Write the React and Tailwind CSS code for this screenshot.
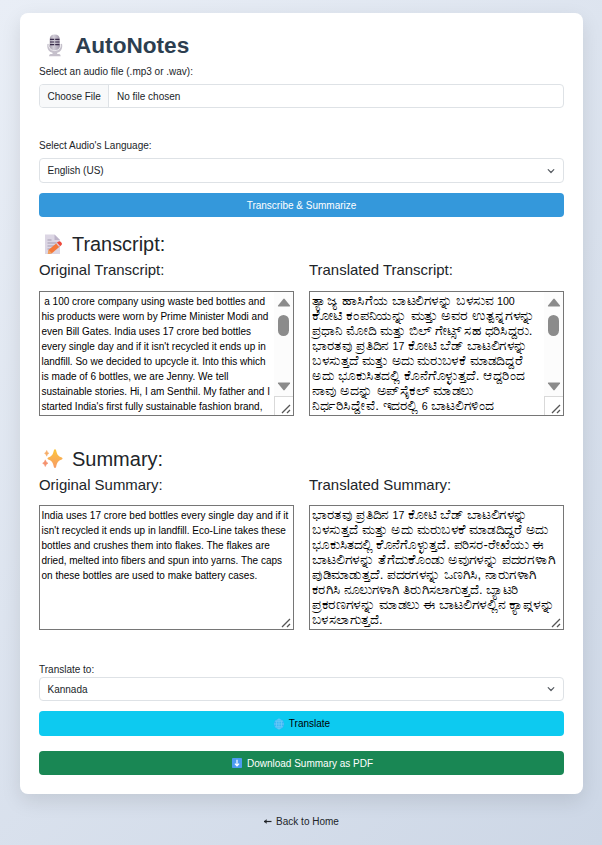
import React from "react";

const ORIGINAL_TRANSCRIPT = [
  "\u00a0a 100 crore company using waste bed bottles and",
  "his products were worn by Prime Minister Modi and",
  "even Bill Gates. India uses 17 crore bed bottles",
  "every single day and if it isn't recycled it ends up in",
  "landfill. So we decided to upcycle it. Into this which",
  "is made of 6 bottles, we are Jenny. We tell",
  "sustainable stories. Hi, I am Senthil. My father and I",
  "started India's first fully sustainable fashion brand,",
];

const TRANSLATED_TRANSCRIPT = [
  ["ತ್ಯಾಜ್ಯ ಹಾಸಿಗೆಯ ಬಾಟಲಿಗಳನ್ನು ಬಳಸುವ 100", "scale-x-[1.064]"],
  ["ಕೋಟಿ ಕಂಪನಿಯನ್ನು ಮತ್ತು ಅವರ ಉತ್ಪನ್ನಗಳನ್ನು", "scale-x-[1.121]"],
  ["ಪ್ರಧಾನಿ ಮೋದಿ ಮತ್ತು ಬಿಲ್ ಗೇಟ್ಸ್ ಸಹ ಧರಿಸಿದ್ದರು.", "scale-x-[1.048]"],
  ["ಭಾರತವು ಪ್ರತಿದಿನ 17 ಕೋಟಿ ಬೆಡ್ ಬಾಟಲಿಗಳನ್ನು", "scale-x-[1.060]"],
  ["ಬಳಸುತ್ತದೆ ಮತ್ತು ಅದು ಮರುಬಳಕೆ ಮಾಡದಿದ್ದರೆ", "scale-x-[1.061]"],
  ["ಅದು ಭೂಕುಸಿತದಲ್ಲಿ ಕೊನೆಗೊಳ್ಳುತ್ತದೆ. ಆದ್ದರಿಂದ", "scale-x-[1.057]"],
  ["ನಾವು ಅದನ್ನು ಅಪ್‌ಸೈಕಲ್ ಮಾಡಲು", "scale-x-[1.095]"],
  ["ನಿರ್ಧರಿಸಿದ್ದೇವೆ. ಇದರಲ್ಲಿ 6 ಬಾಟಲಿಗಳಿಂದ", "scale-x-[1.072]"],
];

const ORIGINAL_SUMMARY = [
  "India uses 17 crore bed bottles every single day and if it",
  "isn't recycled it ends up in landfill. Eco-Line takes these",
  "bottles and crushes them into flakes. The flakes are",
  "dried, melted into fibers and spun into yarns. The caps",
  "on these bottles are used to make battery cases.",
];

const TRANSLATED_SUMMARY = [
  ["ಭಾರತವು ಪ್ರತಿದಿನ 17 ಕೋಟಿ ಬೆಡ್ ಬಾಟಲಿಗಳನ್ನು", "scale-x-[1.060]"],
  ["ಬಳಸುತ್ತದೆ ಮತ್ತು ಅದು ಮರುಬಳಕೆ ಮಾಡದಿದ್ದರೆ ಅದು", "scale-x-[1.057]"],
  ["ಭೂಕುಸಿತದಲ್ಲಿ ಕೊನೆಗೊಳ್ಳುತ್ತದೆ. ಪರಿಸರ-ರೇಖೆಯು ಈ", "scale-x-[1.030]"],
  ["ಬಾಟಲಿಗಳನ್ನು ತೆಗೆದುಕೊಂಡು ಅವುಗಳನ್ನು ಪದರಗಳಾಗಿ", "scale-x-[1.089]"],
  ["ಪುಡಿಮಾಡುತ್ತದೆ. ಪದರಗಳನ್ನು ಒಣಗಿಸಿ, ನಾರುಗಳಾಗಿ", "scale-x-[1.058]"],
  ["ಕರಗಿಸಿ ನೂಲುಗಳಾಗಿ ತಿರುಗಿಸಲಾಗುತ್ತದೆ. ಬ್ಯಾಟರಿ", "scale-x-[1.044]"],
  ["ಪ್ರಕರಣಗಳನ್ನು ಮಾಡಲು ಈ ಬಾಟಲಿಗಳಲ್ಲಿನ ಕ್ಯಾಪ್ಗಳನ್ನು", "scale-x-[1.090]"],
  ["ಬಳಸಲಾಗುತ್ತದೆ.", "scale-x-[1.047]"],
];

function MicIcon() {
  return (
    <svg width="16" height="23" viewBox="0 0 16 23" className="shrink-0">
      <defs>
        <linearGradient id="mic" x1="0" y1="0" x2="1" y2="0">
          <stop offset="0" stopColor="#a59eac" />
          <stop offset="0.4" stopColor="#d4d0da" />
          <stop offset="1" stopColor="#a097aa" />
        </linearGradient>
      </defs>
      <path d="M0.300 10.500q.7-1.300 1.700 0h11.500q1-1.300 1.700 0v2.500q-.6 4.700-5 5.700v1.200h2q1.500.5 1.500 2.400H2q0-1.900 1.500-2.400h2v-1.200q-4.600-1-5.200-5.700z" fill="#c5c0cb" />
      <path d="M1.900 10.500v2.300q1 3.800 5.800 3.800t5.800-3.800v-2.300" fill="none" stroke="#fff" strokeWidth=".7" />
      <path d="M2.700 5.300q0-4.700 5-4.700t5 4.700v7.200q-1 3.500-5 3.500t-5-3.500z" fill="url(#mic)" />
      <path d="M3 5.400h4.200M8.200 5.400h4.300M3 8h4.200M8.200 8h4.300M3 10.600h4.200M8.200 10.600h4.300" stroke="#382b4a" strokeWidth="1.200" />
    </svg>
  );
}

function MemoIcon() {
  return (
    <svg width="19" height="21" viewBox="0 0 19 21" className="shrink-0">
      <path d="M1 .5h9.500L16 6v14H1z" fill="#dcd6e4" />
      <path d="M10.500.5 16 6h-5.500z" fill="#bdb4c9" />
      <path d="M3.500 6h4M3.500 9h9M3.500 12h8M3.500 15h4" stroke="#a59db2" strokeWidth="1" />
      <path d="m3.800 20 .9-4.300 9-7.500 3 3.500-8.800 7.500z" fill="#f4783a" />
      <path d="m4.700 15.700 3.200 3.500L3.800 20z" fill="#f0a562" />
      <path d="m12.600 9.100 2.100-1.700q1-.6 2 .3l1 1.200q.7 1.200-.2 2l-1.900 1.700z" fill="#ee493c" />
      <path d="m12.100 9.500 1-.8 3 3.400-1 .9z" fill="#d9cede" />
    </svg>
  );
}

function SparklesIcon() {
  return (
    <svg width="21" height="20" viewBox="0 0 21 20" className="shrink-0">
      <defs>
        <linearGradient id="spark" x1="0" y1="0" x2="0" y2="1">
          <stop offset="0" stopColor="#fcc63b" />
          <stop offset="1" stopColor="#f79a67" />
        </linearGradient>
      </defs>
      <path d="M13 .3c.6 0 .9.4 1.100 1 1 4.500 2 6 5.700 7.200 1 .3 1 1.700 0 2-3.700 1.300-4.700 3-5.700 7.500-.3 1.300-1.900 1.300-2.200 0-1-4.500-2-6.200-5.700-7.500-1-.3-1-1.700 0-2 3.700-1.200 4.700-2.700 5.700-7.200.2-.6.5-1 1.100-1Z" fill="url(#spark)" />
      <path d="M4.700 1.400q.5 2.200 2.200 2.900-1.700.7-2.200 2.900-.5-2.200-2.200-2.900 1.700-.7 2.200-2.900Z" fill="#f6ad68" stroke="#f6ad68" strokeWidth=".5" />
      <path d="M3.300 10.800q.6 2.600 2.700 3.400-2.100.8-2.700 3.400-.6-2.600-2.700-3.400 2.100-.8 2.700-3.400Z" fill="#f5926f" stroke="#f5926f" strokeWidth=".5" />
    </svg>
  );
}

function GlobeIcon() {
  return (
    <svg width="12" height="12" viewBox="0 0 12 12" className="shrink-0">
      <circle cx="6" cy="6" r="5.200" fill="#38b6f5" />
      <g fill="none" stroke="#6fcbf8" strokeWidth=".8">
        <ellipse cx="6" cy="6" rx="2.500" ry="5" />
        <path d="M6 1v10M1 6h10M2 3.200h8M2 8.800h8" />
      </g>
    </svg>
  );
}

function DownIcon() {
  return (
    <svg width="10" height="10" viewBox="0 0 10 10" className="shrink-0">
      <rect width="10" height="10" rx=".8" fill="#4d9bf0" />
      <path d="M5 1.700v6M2.900 5.700 5 7.900l2.100-2.200" fill="none" stroke="#fff" strokeWidth="1.200" />
    </svg>
  );
}

function Select({ value }) {
  return (
    <div className="flex h-full items-center justify-between rounded border border-[#dee2e6] pl-[7.5px] pr-2">
      <span>{value}</span>
      <svg width="8" height="8" viewBox="0 0 8 8" fill="none" stroke="#565b61" strokeWidth="1.2">
        <path d="M1.200 2.700 4 5.500l2.800-2.800" strokeLinecap="round" strokeLinejoin="round" />
      </svg>
    </div>
  );
}

function Grip() {
  return (
    <svg width="10" height="10" viewBox="0 0 10 10" stroke="#555" strokeWidth="1.300">
      <path d="M1 9 9 1M6 9l3-3" />
    </svg>
  );
}

function KannadaLine({ text, stretch }) {
  return (
    <div className={"flex h-[15px] w-max origin-left items-baseline whitespace-pre text-[12.5px] leading-[15px] " + stretch}>
      {text.split(/(\d+)/).map((part, i) =>
        /^\d+$/.test(part) ? <span key={i} className="text-[10px]">{part}</span> : <span key={i}>{part}</span>
      )}
    </div>
  );
}

function TextBox({ lines, scroll }) {
  return (
    <div className="relative h-[125px] overflow-hidden border border-[#767676] bg-white pl-[1.5px] pt-[2px] text-black">
      {lines.map((line, i) =>
        Array.isArray(line) ? (
          <KannadaLine key={i} text={line[0]} stretch={line[1]} />
        ) : (
          <div key={i} className="h-[15px] whitespace-nowrap leading-[15px]">{line}</div>
        )
      )}
      {scroll && (
        <div className="absolute inset-y-0 right-0 flex w-[19px] flex-col items-center bg-[#fcfcfc]">
          <svg width="14" height="9" viewBox="0 0 14 9" className="mt-[6px]" fill="#8b8b8b">
            <path d="M6.300.9q.7-.7 1.400 0L13 7.500q.5 1-.6 1H1.600q-1.100 0-.6-1z" />
          </svg>
          <div className="mt-2 h-[21px] w-[11px] rounded-full bg-[#8b8b8b]" />
          <svg width="14" height="9" viewBox="0 0 14 9" className="mt-[46px]" fill="#8b8b8b">
            <path d="M6.300 8.100q.7.700 1.400 0L13 1.500q.5-1-.6-1H1.600q-1.100 0-.6 1z" />
          </svg>
          <div className="absolute bottom-0 right-0 h-[19px] w-[19px] border-l border-t border-[#d9d9d9] bg-white" />
        </div>
      )}
      <div className="absolute bottom-[1px] right-[2px]"><Grip /></div>
    </div>
  );
}

function Pair({ left, right }) {
  return (
    <div className="grid grid-cols-2 gap-[15px] text-[14.95px] leading-[18px] text-[#212529]">
      <h4>{left}</h4>
      <h4>{right}</h4>
    </div>
  );
}

export default function App() {
  return (
    <div className="h-[845px] w-[602px] bg-[linear-gradient(135deg,#e9eef6,#cdd7e6)] px-5 pt-[13px] font-['Liberation_Sans',Arial,sans-serif] text-[10px] leading-[15px] text-[#212529]">
      <main className="h-[781px] w-[563px] rounded-lg bg-white px-[19px] pt-[18px] shadow-[0_7px_20px_rgba(0,0,0,0.1)]">
        <h1 className="flex h-7 items-center pl-2 text-[22.6px] font-bold leading-7 text-[#2c3e50]">
          <MicIcon />
          <span className="ml-3 pt-px">AutoNotes</span>
        </h1>
        <div className="mt-[5px] h-[15px]">Select an audio file (.mp3 or .wav):</div>
        <div className="mt-[5px] flex h-6 items-stretch overflow-hidden rounded border border-[#dee2e6]">
          <div className="flex w-[69px] items-center border-r border-[#dee2e6] bg-[#f8f9fa] pl-[7.5px]">Choose File</div>
          <div className="flex items-center pl-2">No file chosen</div>
        </div>

        <div className="mt-[30px] h-[15px]">Select Audio's Language:</div>
        <div className="mt-[5px] h-[25px]"><Select value="English (US)" /></div>
        <div className="mt-[10px] flex h-6 items-center justify-center rounded bg-[#3498db] pt-px text-white">
          Transcribe &amp; Summarize
        </div>

        <h2 className="mt-[15px] flex h-6 items-center pl-[5px] text-[19.9px] leading-6">
          <MemoIcon />
          <span className="ml-[9px]">Transcript:</span>
        </h2>
        <div className="mt-[5px]"><Pair left="Original Transcript:" right="Translated Transcript:" /></div>
        <div className="mt-[12px] grid grid-cols-2 gap-[15px]">
          <TextBox lines={ORIGINAL_TRANSCRIPT} scroll />
          <TextBox lines={TRANSLATED_TRANSCRIPT} scroll />
        </div>

        <h2 className="mt-[31px] flex h-6 items-center pl-[3px] text-[20px] leading-6">
          <SparklesIcon />
          <span className="ml-[9px]">Summary:</span>
        </h2>
        <div className="mt-[5px]"><Pair left="Original Summary:" right="Translated Summary:" /></div>
        <div className="mt-[11px] grid grid-cols-2 gap-[15px]">
          <TextBox lines={ORIGINAL_SUMMARY} />
          <TextBox lines={TRANSLATED_SUMMARY} />
        </div>

        <div className="mt-[32px] h-[15px]">Translate to:</div>
        <div className="h-6"><Select value="Kannada" /></div>
        <div className="mt-[10px] flex h-[25px] items-center justify-center gap-1 rounded bg-[#0dcaf0] text-black">
          <GlobeIcon />
          Translate
        </div>
        <div className="mt-[15px] flex h-6 items-center justify-center gap-[5px] rounded bg-[#198754] pl-[2px] text-white">
          <DownIcon />
          Download Summary as PDF
        </div>
      </main>
      <a className="mt-5 flex justify-center gap-1">
        <svg width="9" height="15" viewBox="0 0 9 15" fill="none" stroke="#212529" strokeWidth="1.200">
          <path d="M8.500 7.500H1" />
          <path d="M3.500 5.500 1 7.500l2.500 2z" fill="#212529" strokeWidth=".3" />
        </svg>
        Back to Home
      </a>
    </div>
  );
}
